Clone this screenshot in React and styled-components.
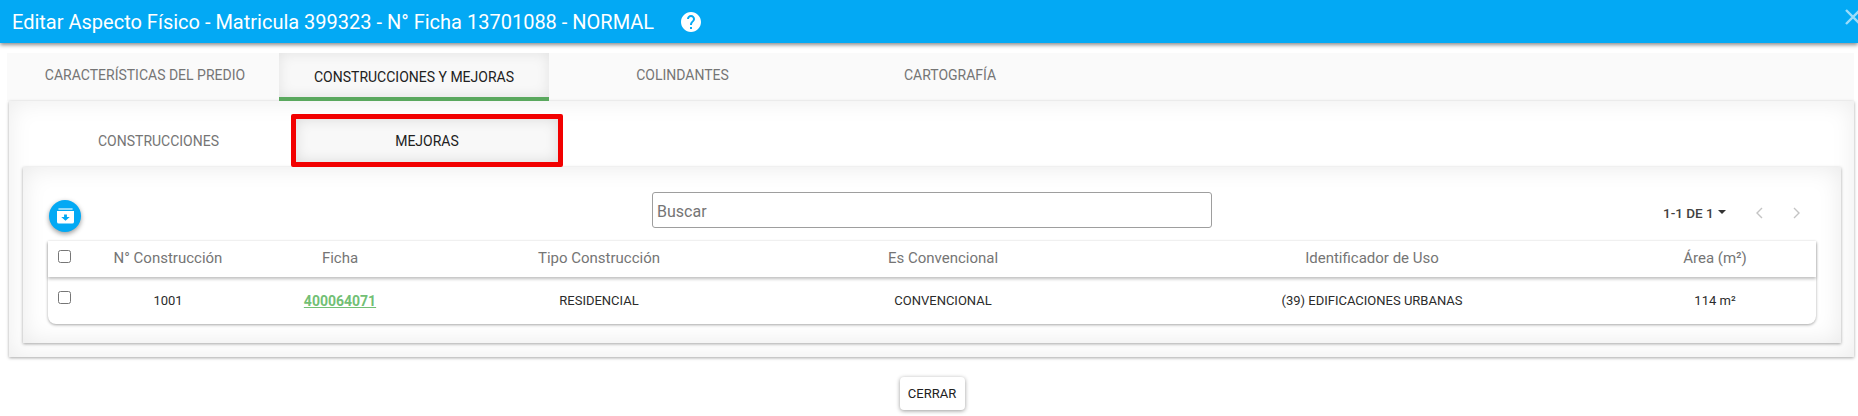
import React from 'react';
import styled, { createGlobalStyle } from 'styled-components';
import { MdHelp } from 'react-icons/md';

const GlobalStyle = createGlobalStyle`
  html, body {
    margin: 0;
    padding: 0;
    background: #fff;
    font-family: Roboto, "Liberation Sans", sans-serif;
  }
`;

const Page = styled.div`
  width: 1858px;
  height: 416px;
  overflow: hidden;
  background: #fff;
`;

const TitleBar = styled.header`
  height: 43px;
  display: flex;
  align-items: center;
  padding-left: 12px;
  background: #03a9f4;
  color: #fff;
  box-shadow: 0 2px 4px rgba(0, 0, 0, 0.45);
  overflow: hidden;
`;

const Title = styled.h1`
  margin: 0;
  font-size: 20px;
  font-weight: 400;
  white-space: nowrap;
`;

const HelpIcon = styled(MdHelp)`
  margin-left: 25px;
  font-size: 24px;
  color: #fff;
`;

const CloseIcon = styled.svg`
  width: 16px;
  height: 16px;
  margin-left: auto;
  margin-right: -3px;
  margin-top: -9px;
  flex-shrink: 0;
  stroke: rgba(255, 255, 255, 0.6);
  stroke-width: 2.4;
  fill: none;
`;

const Content = styled.div`
  padding: 10px 4px 0 9px;
`;

const TabBar = styled.nav`
  display: flex;
  height: 48px;
  margin-left: -2px;
  background: #fafafa;
`;

const Tab = styled.div`
  width: ${(p) => p.$width}px;
  display: flex;
  align-items: center;
  justify-content: center;
  box-sizing: border-box;
  padding-left: ${(p) => p.$nudge || 0}px;
  font-size: 14px;
  font-weight: 400;
  color: ${(p) => (p.$active ? '#212121' : '#757575')};
  border-bottom: 4px solid ${(p) => (p.$active ? '#5aa85e' : 'transparent')};
  ${(p) => p.$active && `
    padding-top: 4px;
    background: #f8f8f8;
    box-shadow: inset 0 0 14px rgba(0, 0, 0, 0.09);
  `}
`;

const OuterPanel = styled.section`
  box-sizing: border-box;
  height: 256px;
  padding: 13px 13px 0 14px;
  background: #fff;
  box-shadow: inset 0 0 24px rgba(0, 0, 0, 0.08), 0 1px 3px rgba(0, 0, 0, 0.35);
`;

const SubTabBar = styled.div`
  display: flex;
  height: 53px;
`;

const SubTab = styled.div`
  width: ${(p) => p.$width}px;
  display: flex;
  align-items: center;
  justify-content: center;
  box-sizing: border-box;
  padding-left: ${(p) => p.$nudge || 0}px;
  font-size: 14px;
  font-weight: 400;
  color: ${(p) => (p.$active ? '#212121' : '#757575')};
  ${(p) => p.$active && `
    background: #f8f8f8;
    box-shadow: inset 0 0 14px rgba(0, 0, 0, 0.12);
    border: 5px solid #f20000;
    border-radius: 2px;
  `}
`;

const InnerPanel = styled.div`
  box-sizing: border-box;
  height: 176px;
  padding: 0 25px 0 25px;
  background: #fff;
  box-shadow: inset 0 0 24px rgba(0, 0, 0, 0.09), 0 1px 3px rgba(0, 0, 0, 0.35);
`;

const Toolbar = styled.div`
  height: 74px;
  display: flex;
  align-items: flex-start;
`;

const RoundButton = styled.button`
  width: 32px;
  height: 32px;
  margin-top: 33px;
  margin-left: 1px;
  padding: 0;
  border: 0;
  border-radius: 50%;
  background: #03a9f4;
  box-shadow: 0 2px 5px rgba(0, 0, 0, 0.4);
  display: flex;
  align-items: center;
  justify-content: center;
`;

const SearchInput = styled.input`
  box-sizing: border-box;
  width: 560px;
  height: 36px;
  margin-top: 25px;
  margin-left: 571px;
  padding: 2px 4px 0;
  border: 1px solid #9e9e9e;
  border-radius: 3px;
  background: #fff;
  font: 400 16px Roboto, sans-serif;
  outline: none;
  &::placeholder {
    color: #757575;
    opacity: 1;
  }
`;

const Pager = styled.div`
  display: flex;
  align-items: center;
  height: 18px;
  margin-top: 37px;
  margin-left: 451px;
`;

const PagerLabel = styled.span`
  font-size: 13.5px;
  font-weight: 500;
  color: #424242;
`;

const Caret = styled.span`
  width: 0;
  height: 0;
  margin-left: 4px;
  margin-top: -3px;
  border-left: 4px solid transparent;
  border-right: 4px solid transparent;
  border-top: 4px solid #333;
`;

const Chevron = styled.svg`
  width: 10px;
  height: 14px;
  margin-left: ${(p) => p.$gap}px;
  stroke: #c4c4c4;
  stroke-width: 1.4;
  fill: none;
`;

const Table = styled.div`
  border-radius: 0 0 8px 8px;
  background: #fff;
  box-shadow: 0 1px 3px rgba(0, 0, 0, 0.35);
`;

const Row = styled.div`
  display: grid;
  grid-template-columns: 40px 160px 184px 334px 354px 504px 182px;
  box-sizing: border-box;
  height: ${(p) => (p.$head ? 36 : 47)}px;
  padding-right: 10px;
  align-items: center;
  ${(p) => p.$head && 'padding-bottom: 2px; box-shadow: 0 2px 3px rgba(0, 0, 0, 0.25); background: #fff; position: relative;'}
`;

const Cell = styled.div`
  text-align: center;
  font-size: ${(p) => (p.$head ? 15 : 13)}px;
  color: ${(p) => (p.$head ? '#757575' : '#2b2b2b')};
`;

const FichaLink = styled.a`
  font-size: 14px;
  font-weight: 700;
  color: #72bf75;
  text-decoration: underline;
`;

const CheckCell = styled.div`
  padding-left: 10px;
`;

const Checkbox = styled.span`
  display: block;
  box-sizing: border-box;
  width: 13px;
  height: 13px;
  margin-top: ${(p) => p.$shift}px;
  border: 1px solid #767676;
  border-radius: 2.5px;
  background: #fff;
`;

const Footer = styled.div`
  display: flex;
  justify-content: center;
  margin-top: 20px;
  padding-left: 1px;
`;

const CloseButton = styled.button`
  width: 65px;
  height: 33px;
  padding: 0;
  border: 0;
  border-radius: 4px;
  background: #fff;
  box-shadow: 0 1px 4px rgba(0, 0, 0, 0.4);
  font: 400 13px Roboto, sans-serif;
  color: #212121;
`;

const columns = ['N° Construcción', 'Ficha', 'Tipo Construcción', 'Es Convencional', 'Identificador de Uso', 'Área (m²)'];

export default function App() {
  return (
    <Page>
      <GlobalStyle />
      <TitleBar>
        <Title>Editar Aspecto Físico - Matricula 399323 - N° Ficha 13701088 - NORMAL</Title>
        <HelpIcon />
        <CloseIcon viewBox="0 0 16 16">
          <path d="M1 1 L15 15 M15 1 L1 15" />
        </CloseIcon>
      </TitleBar>
      <Content>
        <TabBar>
          <Tab $width={272} $nudge={4}>CARACTERÍSTICAS DEL PREDIO</Tab>
          <Tab $width={270} $active>CONSTRUCCIONES Y MEJORAS</Tab>
          <Tab $width={267}>COLINDANTES</Tab>
          <Tab $width={268}>CARTOGRAFÍA</Tab>
        </TabBar>
        <OuterPanel>
          <SubTabBar>
            <SubTab $width={268} $nudge={3}>CONSTRUCCIONES</SubTab>
            <SubTab $width={272} $active>MEJORAS</SubTab>
          </SubTabBar>
          <InnerPanel>
            <Toolbar>
              <RoundButton aria-label="Exportar">
                <svg width="17" height="16" viewBox="0 0 18 16">
                  <rect x="1.5" y="0" width="15" height="1.2" fill="#fff" />
                  <path d="M0 2.8 H18 V14 a2 2 0 0 1 -2 2 H2 a2 2 0 0 1 -2 -2 Z" fill="#fff" />
                  <path d="M7.5 6.5 H10.5 V9 H13.5 L9 13 L4.5 9 H7.5 Z" fill="#03a9f4" />
                </svg>
              </RoundButton>
              <SearchInput placeholder="Buscar" />
              <Pager>
                <PagerLabel>1-1 DE 1</PagerLabel>
                <Caret />
                <Chevron $gap={29} viewBox="0 0 10 14"><path d="M7 2 L2 7 L7 12" /></Chevron>
                <Chevron $gap={26} viewBox="0 0 10 14"><path d="M3 2 L8 7 L3 12" /></Chevron>
              </Pager>
            </Toolbar>
            <Table>
              <Row $head>
                <CheckCell><Checkbox $shift={-4} /></CheckCell>
                {columns.map((c) => <Cell $head key={c}>{c}</Cell>)}
              </Row>
              <Row>
                <CheckCell><Checkbox $shift={-6} /></CheckCell>
                <Cell>1001</Cell>
                <Cell><FichaLink>400064071</FichaLink></Cell>
                <Cell>RESIDENCIAL</Cell>
                <Cell>CONVENCIONAL</Cell>
                <Cell>(39) EDIFICACIONES URBANAS</Cell>
                <Cell>114 m²</Cell>
              </Row>
            </Table>
          </InnerPanel>
        </OuterPanel>
        <Footer>
          <CloseButton>CERRAR</CloseButton>
        </Footer>
      </Content>
    </Page>
  );
}
